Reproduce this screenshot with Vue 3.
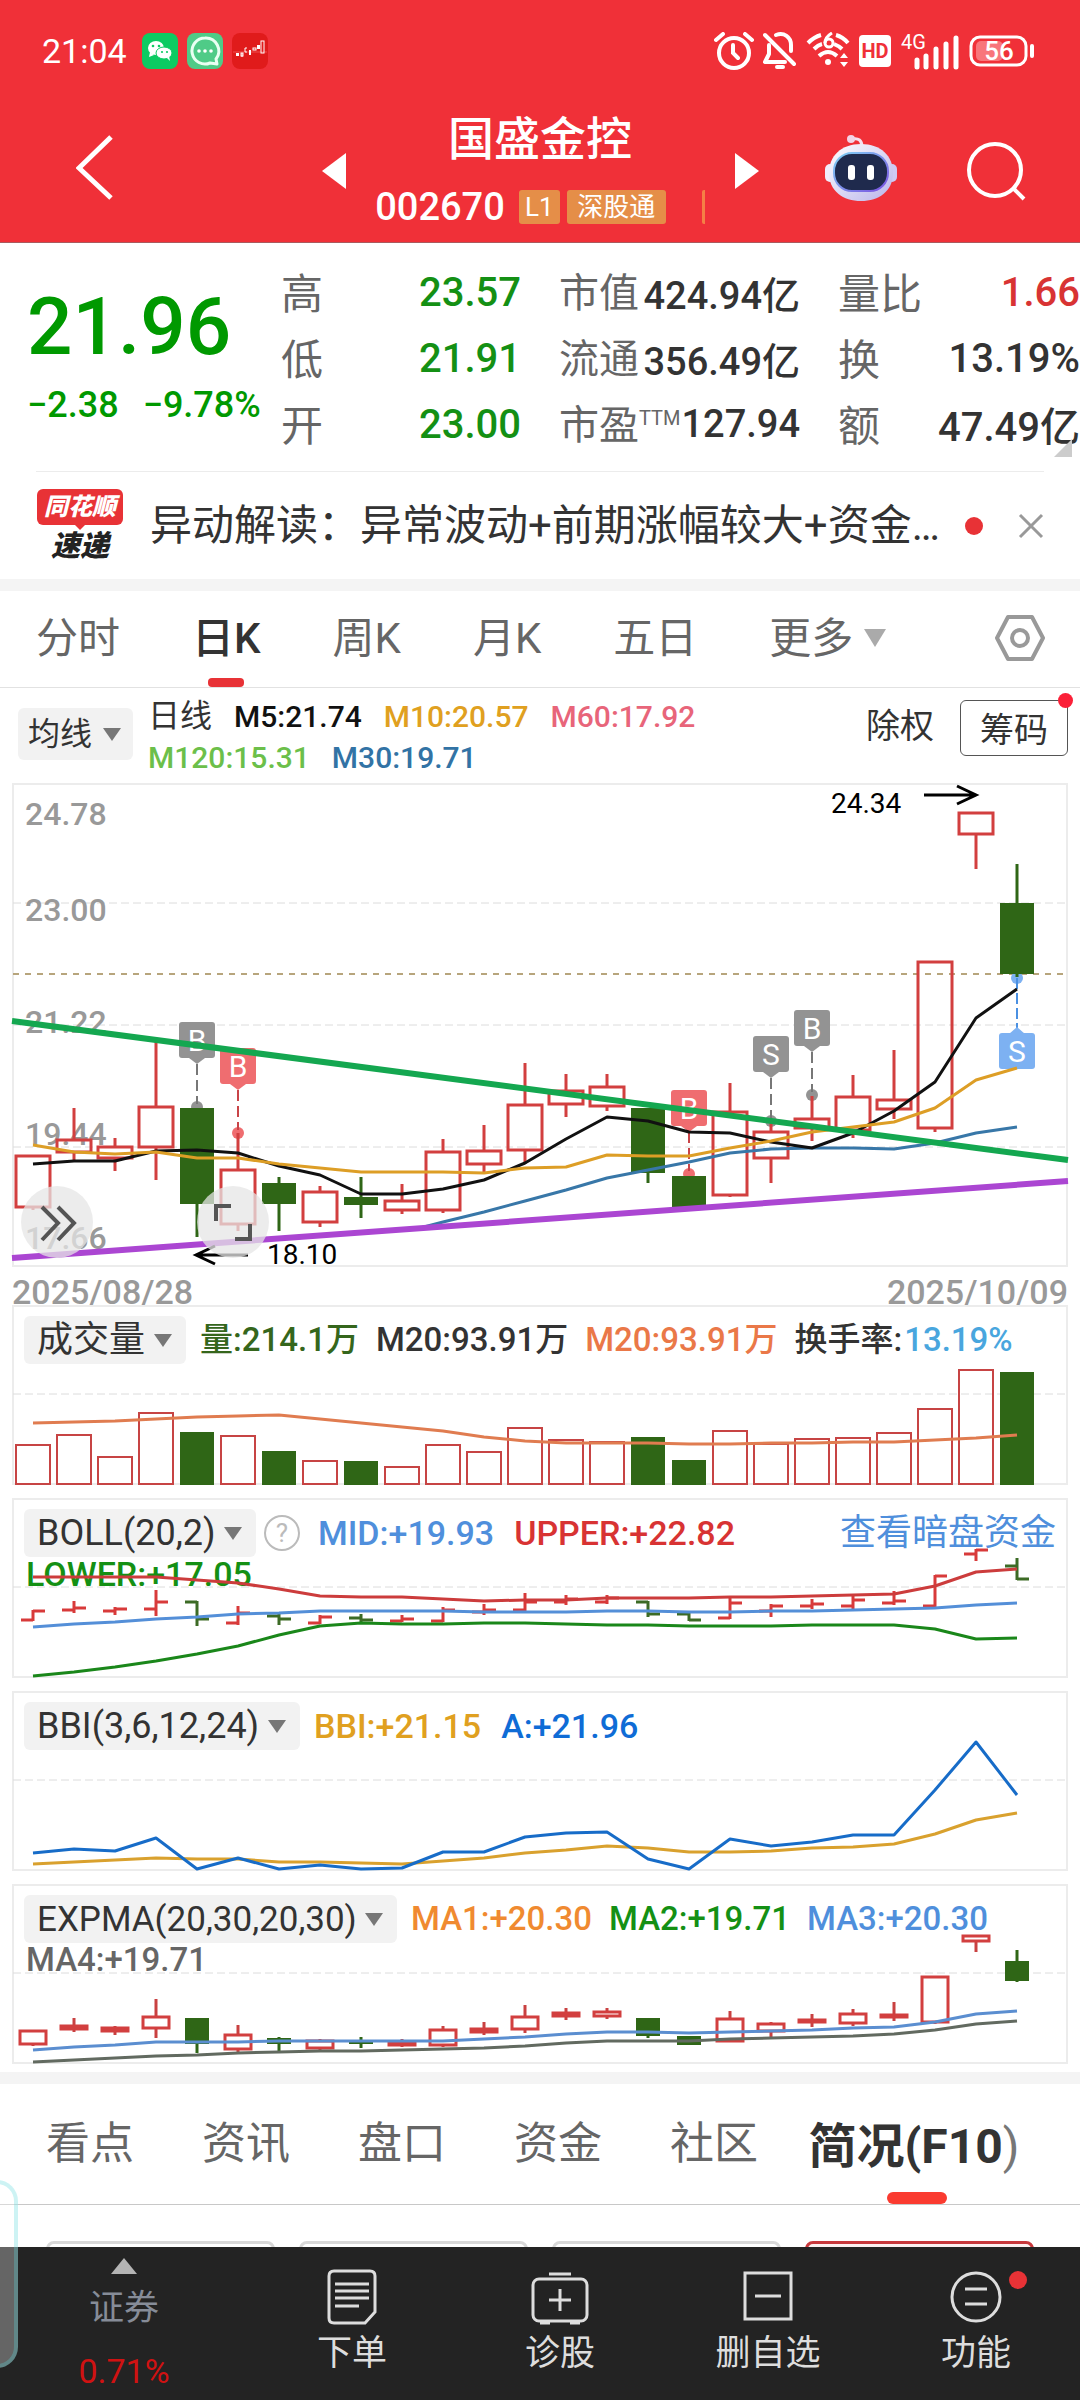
<script setup>
import { ref } from 'vue'

const step = 41
const cx = (i) => 33 + step * i
const path = (ys, from = 0) => ys.map((y, i) => `${cx(i + from)},${y}`).join(' ')

// up, high, body top, body bottom, low
const candles = [
  [1, 1155, 1155, 1208, 1210], [1, 1108, 1139, 1153, 1160], [1, 1138, 1146, 1159, 1171],
  [1, 1042, 1106, 1148, 1180], [0, 1108, 1108, 1204, 1237], [1, 1133, 1169, 1225, 1231],
  [0, 1177, 1183, 1204, 1231], [1, 1186, 1191, 1223, 1227], [0, 1177, 1197, 1205, 1218],
  [1, 1184, 1200, 1211, 1214], [1, 1139, 1151, 1211, 1213], [1, 1125, 1150, 1165, 1172],
  [1, 1063, 1104, 1151, 1164], [1, 1074, 1090, 1105, 1117], [1, 1074, 1086, 1107, 1111],
  [0, 1108, 1108, 1173, 1183], [0, 1176, 1176, 1207, 1207], [1, 1083, 1111, 1196, 1197],
  [1, 1123, 1131, 1159, 1183], [1, 1096, 1118, 1129, 1141], [1, 1075, 1096, 1131, 1138],
  [1, 1050, 1099, 1110, 1119], [1, 961, 961, 1129, 1132], [1, 812, 812, 835, 869],
  [0, 864, 903, 974, 977],
].map(([up, high, top, bottom, low], i) => ({ up: !!up, high, top, bottom, low, x: cx(i) }))

const scaled = (base, k) => candles.map((c) => {
  const f = (v) => Math.round(base + (v - 812) * k)
  return { up: c.up, x: c.x, high: f(c.high), top: f(c.top), bottom: f(c.bottom), low: f(c.low) }
})
const bollBars = scaled(1550, 0.177)
const expCandles = scaled(1936, 0.276)

const ma5 = path([1164, 1161, 1161, 1151, 1150, 1153, 1166, 1175, 1194, 1194, 1189, 1180, 1163, 1139, 1117, 1121, 1132, 1133, 1142, 1148, 1133, 1111, 1082, 1018, 989])
const ma10 = path([1145, 1152, 1154, 1152, 1158, 1158, 1164, 1168, 1172, 1172, 1172, 1173, 1168, 1167, 1155, 1156, 1156, 1148, 1141, 1132, 1127, 1122, 1108, 1080, 1068])
const ma30 = '420,1228 ' + path([1222, 1212, 1201, 1190, 1178, 1170, 1162, 1153, 1149, 1148, 1148, 1149, 1143, 1133, 1127], 10)

const volTops = [1444, 1434, 1456, 1412, 1432, 1435, 1451, 1460, 1461, 1466, 1444, 1451, 1427, 1439, 1441, 1437, 1460, 1430, 1443, 1438, 1437, 1432, 1408, 1369, 1372]
const volumes = volTops.map((y, i) => ({ y, x: cx(i), up: candles[i].up }))
const volMa = path([1423, 1422, 1421, 1419, 1417, 1416, 1415, 1419, 1423, 1427, 1431, 1437, 1441, 1443, 1443, 1443, 1444, 1444, 1443, 1443, 1442, 1442, 1440, 1438, 1435])

const upper = path([1577, 1577, 1577, 1577, 1580, 1583, 1589, 1596, 1597, 1597, 1599, 1601, 1600, 1600, 1598, 1598, 1598, 1597, 1597, 1596, 1595, 1594, 1586, 1572, 1569])
const mid = path([1627, 1624, 1622, 1619, 1617, 1614, 1613, 1611, 1611, 1611, 1611, 1612, 1612, 1612, 1611, 1611, 1612, 1612, 1611, 1611, 1610, 1609, 1608, 1605, 1603])
const lower = path([1676, 1672, 1667, 1661, 1654, 1646, 1635, 1626, 1623, 1624, 1624, 1623, 1623, 1624, 1625, 1625, 1626, 1626, 1626, 1625, 1625, 1625, 1629, 1639, 1638])

const lineA = path([1853, 1849, 1851, 1838, 1869, 1858, 1869, 1865, 1869, 1868, 1852, 1852, 1837, 1833, 1832, 1859, 1869, 1839, 1846, 1842, 1835, 1835, 1790, 1742, 1795])
const lineBbi = path([1864, 1862, 1860, 1858, 1859, 1859, 1862, 1862, 1863, 1864, 1861, 1858, 1853, 1850, 1846, 1848, 1852, 1852, 1851, 1848, 1847, 1844, 1834, 1820, 1813])

const expFast = path([2050, 2047, 2045, 2042, 2042, 2042, 2041, 2041, 2041, 2041, 2041, 2039, 2037, 2034, 2032, 2032, 2033, 2032, 2031, 2030, 2028, 2027, 2022, 2014, 2011])
const expSlow = path([2062, 2060, 2058, 2056, 2055, 2053, 2052, 2051, 2051, 2050, 2049, 2048, 2046, 2043, 2041, 2041, 2041, 2039, 2038, 2037, 2036, 2034, 2030, 2024, 2021])

const priceLabels = [['24.78', 825], ['23.00', 921], ['21.22', 1033], ['19.44', 1145], ['17.66', 1249]]

const markers = [
  { i: 4, t: 'B', y: 1022, dot: 1107, c: '#939393', l: '#777' },
  { i: 5, t: 'B', y: 1048, dot: 1133, c: '#ef6d70', l: '#c94448' },
  { i: 16, t: 'B', y: 1090, dot: 1174, c: '#ef6d70', l: '#c94448' },
  { i: 18, t: 'S', y: 1036, dot: 1121, c: '#939393', l: '#777' },
  { i: 19, t: 'B', y: 1010, dot: 1095, c: '#939393', l: '#777' },
]

const stats = [
  [['高', '23.57', 'down'], ['低', '21.91', 'down'], ['开', '23.00', 'down']],
  [['市值', '424.94亿'], ['流通', '356.49亿'], ['市盈', '127.94', '', 'TTM']],
  [['量比', '1.66', 'rise'], ['换', '13.19%'], ['额', '47.49亿']],
]

const periods = ['分时', '日K', '周K', '月K', '五日']
const period = ref('日K')
const infoTabs = ['看点', '资讯', '盘口', '资金', '社区']
</script>

<template>
  <div class="page">
    <header class="top">
      <div class="status">
        <span class="clock">21:04</span>
        <svg class="app" viewBox="0 0 36 36">
          <rect width="36" height="36" rx="8" fill="#0ccb62" />
          <ellipse cx="14" cy="15" rx="8" ry="7" fill="#fff" /><path d="M8 19l-1 5 5-2z" fill="#fff" />
          <ellipse cx="22" cy="20" rx="8" ry="6" fill="#fff" stroke="#0ccb62" /><path d="M25 25l3 3-1-5z" fill="#fff" />
          <g fill="#0ccb62"><circle cx="11" cy="13" r="1.300" /><circle cx="17" cy="13" r="1.300" /><circle cx="20" cy="19" r="1.100" /><circle cx="25" cy="19" r="1.100" /></g>
        </svg>
        <svg class="app" viewBox="0 0 36 36">
          <rect width="36" height="36" rx="8" fill="#4fcb87" />
          <path d="M18 5a13 13 0 1 0 5 25l7 1-1-5A13 13 0 0 0 18 5z" fill="none" stroke="#e9fff2" stroke-width="3" stroke-linejoin="round" />
          <g fill="#fff"><circle cx="12" cy="18" r="1.800" /><circle cx="18" cy="18" r="1.800" /><circle cx="24" cy="18" r="1.800" /></g>
        </svg>
        <svg class="app" viewBox="0 0 36 36">
          <rect width="36" height="36" rx="8" fill="#e01b1b" />
          <path d="M1 19h34" stroke="#ee5050" />
          <g fill="none" stroke="#fff"><path d="M15 15h-2v4h2M10 20v4" /><rect x="9" y="20" width="2" height="3" /><rect x="21" y="15" width="3" height="2" /><rect x="29" y="8" width="3" height="12" /></g>
          <g fill="#fff"><rect x="4" y="20" width="3" height="3" /><rect x="17" y="17" width="2" height="5" /><rect x="25" y="12" width="3" height="4" /></g>
        </svg>
        <div class="signals">
          <svg width="40" height="38" viewBox="0 0 40 38" fill="none" stroke="#fff" stroke-width="4" stroke-linecap="round">
            <circle cx="20" cy="21" r="15" /><path d="M19 13v8l5 5M2 8l7-6M38 8l-7-6" />
          </svg>
          <svg width="34" height="38" viewBox="0 0 34 38" fill="none" stroke="#fff" stroke-width="4" stroke-linecap="round" stroke-linejoin="round">
            <path d="M2 3l29 29M13 3c8-3 15 2 15 10v6M6 13v9l-4 8h20" /><path d="M14 35h6" />
          </svg>
          <svg width="44" height="38" viewBox="0 0 44 38" fill="none" stroke="#fff" stroke-width="4">
            <path d="M2 11q6-6 13-8M30 3q7 2 12 8M8 17q4-4 8-5M28 12q5 2 8 5M13 24q9-8 18 0" />
            <path d="M26 1q-7 4-7 10" stroke-width="3" /><circle cx="23" cy="11" r="4" stroke-width="3" />
            <circle cx="22" cy="30" r="3" fill="#fff" stroke="none" /><path d="M34 26l4-5 4 5zM34 30l4 5 4-5z" fill="#fff" stroke="none" />
          </svg>
          <svg width="32" height="32" viewBox="0 0 32 32">
            <rect width="32" height="32" rx="4" fill="#fff" /><text x="16" y="23" class="hd" text-anchor="middle">HD</text>
          </svg>
          <svg class="cell" width="60" height="38" viewBox="0 0 60 38">
            <text x="1" y="17" class="g4">4G</text>
            <path d="M17 35v-7M26 35V24M36 35V17M46 35V12M56 35V6" stroke="#fff" stroke-width="5" stroke-linecap="round" />
          </svg>
          <svg width="66" height="32" viewBox="0 0 66 32">
            <rect x="2" y="2" width="55" height="28" rx="9" fill="none" stroke="#fff" stroke-width="3" />
            <rect x="7" y="6" width="27" height="20" rx="5" fill="#f8767b" />
            <path d="M63 11v10" stroke="#fff" stroke-width="4" stroke-linecap="round" />
            <text x="30" y="25" class="batt" text-anchor="middle">56</text>
          </svg>
        </div>
      </div>
      <nav class="nav">
        <div class="nav-left">
          <button class="plain" aria-label="返回">
            <svg width="38" height="66" viewBox="0 0 38 66"><path d="M35 2L3 33l32 30" fill="none" stroke="#fff" stroke-width="5" /></svg>
          </button>
        </div>
        <div class="stock">
          <button class="plain" aria-label="上一只"><svg width="24" height="36" viewBox="0 0 24 36"><path d="M24 0v36L0 18z" fill="#fff" /></svg></button>
          <div class="stock-id">
            <h1>国盛金控</h1>
            <div class="code"><span class="num">002670</span><span class="badge">L1</span><span class="badge wide">深股通</span><i></i></div>
          </div>
          <button class="plain" aria-label="下一只"><svg width="24" height="36" viewBox="0 0 24 36"><path d="M0 0v36l24-18z" fill="#fff" /></svg></button>
        </div>
        <div class="nav-right">
          <button class="plain" aria-label="智能助手">
            <svg width="72" height="68" viewBox="0 0 72 68">
              <defs>
                <linearGradient id="shell" x1="0" y1="0" x2="1" y2="1"><stop offset="0" stop-color="#fff" /><stop offset="1" stop-color="#b9b4ea" /></linearGradient>
                <linearGradient id="rim" x1="0" y1="0" x2="1" y2="1"><stop offset="0" stop-color="#7fd3f5" /><stop offset="1" stop-color="#7a4fe0" /></linearGradient>
              </defs>
              <path d="M27 5q10-2 10 8" fill="none" stroke="#f6dfee" stroke-width="3" /><circle cx="26" cy="5" r="4" fill="#f3d3e6" />
              <rect x="0" y="30" width="10" height="18" rx="5" fill="#f1ecfb" /><rect x="62" y="30" width="10" height="18" rx="5" fill="#cfcaf3" />
              <path d="M36 10c20 0 32 12 32 29 0 18-14 28-32 28S4 57 4 39c0-17 12-29 32-29z" fill="url(#shell)" />
              <rect x="9" y="19" width="54" height="38" rx="18" fill="#1f2a4d" stroke="url(#rim)" stroke-width="2" />
              <rect x="23" y="31" width="7" height="15" rx="3" fill="#fff" /><rect x="42" y="31" width="7" height="15" rx="3" fill="#fff" />
            </svg>
          </button>
          <button class="plain" aria-label="搜索">
            <svg width="60" height="60" viewBox="0 0 60 60" fill="none" stroke="#fff" stroke-width="4"><circle cx="29" cy="29" r="26" /><path d="M47 47l11 11" /></svg>
          </button>
        </div>
      </nav>
    </header>

    <section class="quote">
      <div class="last">
        <strong>21.96</strong>
        <p><span>−2.38</span><span>−9.78%</span></p>
      </div>
      <dl v-for="(col, n) in stats" :key="n" :class="'col' + n">
        <div v-for="[name, value, tone, sup] in col" :key="name">
          <dt>{{ name }}<sup v-if="sup">{{ sup }}</sup></dt>
          <dd :class="tone">{{ value }}</dd>
        </div>
      </dl>
      <svg class="corner" width="18" height="18" viewBox="0 0 18 18"><path d="M18 0v18H0z" fill="#ccc" /></svg>
    </section>

    <section class="news">
      <div class="brand">
        <span class="brand-top">同花顺</span>
        <span class="brand-sub">速递</span>
      </div>
      <a href="#">异动解读：异常波动+前期涨幅较大+资金…</a>
      <i class="dot"></i>
      <button class="plain" aria-label="关闭"><svg width="26" height="26" viewBox="0 0 26 26"><path d="M2 2l22 22M24 2L2 24" stroke="#999" stroke-width="3" /></svg></button>
    </section>

    <nav class="periods">
      <button v-for="p in periods" :key="p" class="plain" :class="{ on: p === period }" @click="period = p">{{ p }}</button>
      <button class="plain more">更多<svg width="24" height="20" viewBox="0 0 24 20"><path d="M1 1h22L12 19z" fill="#aaa" /></svg></button>
      <button class="plain gear" aria-label="设置">
        <svg width="50" height="48" viewBox="0 0 50 48" fill="none" stroke="#999" stroke-width="4"><path d="M13 3h24l11 21-11 21H13L2 24z" stroke-linejoin="round" /><circle cx="25" cy="24" r="8" /></svg>
      </button>
    </nav>

    <section class="averages">
      <label class="pick small">
        <select aria-label="主图指标"><option>均线</option></select>
        <svg width="18" height="13" viewBox="0 0 18 13"><path d="M0 0h18L9 13z" fill="#777" /></svg>
      </label>
      <div class="ma">
        <p><span>日线</span><span class="k">M5:21.74</span><span class="y">M10:20.57</span><span class="p">M60:17.92</span></p>
        <p><span class="g">M120:15.31</span><span class="b">M30:19.71</span></p>
      </div>
      <button class="plain adj">除权</button>
      <button class="chips">筹码<i></i></button>
    </section>

    <main class="charts">
      <svg class="chart" viewBox="12 783 1056 485">
        <rect x="13" y="784" width="1054" height="482" class="frame" />
        <path d="M13 903H1067M13 1025H1067M13 1147H1067" class="grid" />
        <path d="M13 974H1067" stroke="#b7a57c" stroke-width="2" stroke-dasharray="6 6" />
        <text v-for="[t, y] in priceLabels" :key="t" x="25" :y="y" class="axis">{{ t }}</text>
        <circle v-for="m in markers" :key="m.i" :cx="cx(m.i)" :cy="m.dot" r="6" :fill="m.c" />
        <circle :cx="cx(24)" cy="978" r="6" fill="#7db1f2" />
        <g v-for="c in candles" :key="c.x">
          <path :d="`M${c.x} ${c.high}V${c.top}M${c.x} ${c.bottom}V${c.low}`" :stroke="c.up ? '#d23f3f' : '#2f6616'" stroke-width="3" />
          <rect v-if="c.up" :x="c.x - 17" :y="c.top + 1" width="34" :height="c.bottom - c.top - 2" fill="none" stroke="#d23f3f" stroke-width="3" />
          <rect v-else :x="c.x - 17" :y="c.top" width="34" :height="c.bottom - c.top" fill="#2f6616" />
        </g>
        <g v-for="m in markers" :key="'m' + m.i">
          <path :d="`M${cx(m.i)} ${m.y + 42}V${m.dot - 3}`" :stroke="m.l" stroke-width="2" stroke-dasharray="11 5" />
          <path :d="`M${cx(m.i) - 8} ${m.y + 36}h16l-8 6z`" :fill="m.c" />
          <rect :x="cx(m.i) - 18" :y="m.y" width="36" height="36" rx="3" :fill="m.c" />
          <text :x="cx(m.i)" :y="m.y + 29" class="mark">{{ m.t }}</text>
        </g>
        <path d="M1017 978V1028" stroke="#4a90e2" stroke-width="2" stroke-dasharray="11 4" />
        <path d="M1009 1034l8-7 8 7z" fill="#7db1f2" />
        <rect x="999" y="1033" width="36" height="36" rx="3" fill="#7db1f2" />
        <text x="1017" y="1062" class="mark">S</text>
        <polyline :points="ma30" class="line" stroke="#3877a8" />
        <polyline :points="ma5" class="line" stroke="#111" />
        <polyline :points="ma10" class="line" stroke="#dd9e26" />
        <path d="M12 1258L1068 1181" stroke="#ab46d2" stroke-width="6" />
        <path d="M12 1021L1068 1160" stroke="#14a750" stroke-width="6" />
        <g fill="none" stroke="#000" stroke-width="3">
          <path d="M924 795h51M957 786l19 9-19 9M248 1255h-51M215 1246l-19 9 19 9" />
        </g>
        <text x="831" y="813" class="peak">24.34</text>
        <text x="267" y="1264" class="peak">18.10</text>
        <circle cx="57" cy="1222" r="36" fill="#e6e6e6" fill-opacity=".75" />
        <circle cx="233" cy="1222" r="36" fill="#e6e6e6" fill-opacity=".75" />
        <g fill="none" stroke="#555" stroke-width="4"><path d="M42 1207l16 16-16 17M58 1207l16 16-16 17M216 1221v-15h15M235 1239h15v-15" /></g>
      </svg>
      <div class="dates"><span>2025/08/28</span><span>2025/10/09</span></div>

      <section class="panel">
        <div class="head tight">
          <label class="pick"><select aria-label="副图一"><option>成交量</option></select><svg width="18" height="13" viewBox="0 0 18 13"><path d="M0 0h18L9 13z" fill="#777" /></svg></label>
          <span class="vol">量:214.1万</span><span class="ink">M20:93.91万</span><span class="o">M20:93.91万</span><span class="ink">换手率:<em>13.19%</em></span>
        </div>
        <svg class="chart" viewBox="12 1305 1056 180">
          <rect x="13" y="1306" width="1054" height="178" class="frame" />
          <path d="M13 1394H1067" class="grid" />
          <g v-for="v in volumes" :key="v.x">
            <rect v-if="v.up" :x="v.x - 17" :y="v.y + 1" width="34" :height="1483 - v.y" fill="none" stroke="#c74444" stroke-width="2" />
            <rect v-else :x="v.x - 17" :y="v.y" width="34" :height="1485 - v.y" fill="#2f6616" />
          </g>
          <polyline :points="volMa" class="line" stroke="#e07c50" />
        </svg>
      </section>

      <section class="panel">
        <div class="head">
          <label class="pick"><select aria-label="副图二"><option>BOLL(20,2)</option></select><svg width="18" height="13" viewBox="0 0 18 13"><path d="M0 0h18L9 13z" fill="#777" /></svg></label>
          <button class="help" aria-label="指标说明">?</button>
          <span class="sky">MID:+19.93</span><span class="rise">UPPER:+22.82</span>
          <a href="#" class="sky">查看暗盘资金</a>
          <p class="down">LOWER:+17.05</p>
        </div>
        <svg class="chart" viewBox="12 1498 1056 180">
          <rect x="13" y="1499" width="1054" height="178" class="frame" />
          <path d="M13 1587H1067" class="grid" />
          <path
            v-for="b in bollBars" :key="b.x" class="line" :stroke="b.up ? '#d83a3a' : '#3c6b25'"
            :d="b.up ? `M${b.x - 12} ${b.bottom}h12M${b.x} ${b.top}h12M${b.x} ${b.high - 1}V${b.low + 1}` : `M${b.x - 12} ${b.top}h12M${b.x} ${b.bottom}h12M${b.x} ${b.high - 1}V${b.low + 1}`"
          />
          <polyline :points="upper" class="line" stroke="#cc3c3c" />
          <polyline :points="lower" class="line" stroke="#1a871a" />
          <polyline :points="mid" class="line" stroke="#548fd8" />
        </svg>
      </section>

      <section class="panel">
        <div class="head">
          <label class="pick"><select aria-label="副图三"><option>BBI(3,6,12,24)</option></select><svg width="18" height="13" viewBox="0 0 18 13"><path d="M0 0h18L9 13z" fill="#777" /></svg></label>
          <span class="y">BBI:+21.15</span><span class="blue">A:+21.96</span>
        </div>
        <svg class="chart" viewBox="12 1691 1056 180">
          <rect x="13" y="1692" width="1054" height="178" class="frame" />
          <path d="M13 1780H1067" class="grid" />
          <polyline :points="lineBbi" class="line" stroke="#d9a12e" />
          <polyline :points="lineA" class="line" stroke="#176cc8" />
        </svg>
      </section>

      <section class="panel">
        <div class="head tight latin">
          <label class="pick"><select aria-label="副图四"><option>EXPMA(20,30,20,30)</option></select><svg width="18" height="13" viewBox="0 0 18 13"><path d="M0 0h18L9 13z" fill="#777" /></svg></label>
          <span class="o2">MA1:+20.30</span><span class="down">MA2:+19.71</span><span class="sky">MA3:+20.30</span>
          <p class="grey">MA4:+19.71</p>
        </div>
        <svg class="chart" viewBox="12 1884 1056 180">
          <rect x="13" y="1885" width="1054" height="178" class="frame" />
          <path d="M13 1973H1067" class="grid" />
          <g v-for="c in expCandles" :key="c.x">
            <path :d="`M${c.x} ${c.high}V${c.top}M${c.x} ${c.bottom}V${c.low}`" :stroke="c.up ? '#c94141' : '#2f6616'" stroke-width="3" />
            <rect v-if="c.up" :x="c.x - 13" :y="c.top" width="26" :height="Math.max(1, c.bottom - c.top - 1)" fill="#fff" stroke="#d23f3f" stroke-width="3" />
            <rect v-else :x="c.x - 12" :y="c.top" width="24" :height="c.bottom - c.top" fill="#2f6616" />
          </g>
          <polyline :points="expFast" class="line" stroke="#5b8ed0" />
          <polyline :points="expSlow" class="line" stroke="#626a60" />
        </svg>
      </section>
    </main>

    <nav class="info">
      <button v-for="t in infoTabs" :key="t" class="plain">{{ t }}</button>
      <button class="plain on">简况(F10<span>)</span></button>
    </nav>
    <div class="cards"><i></i><i></i><i></i><i class="sel"></i></div>

    <footer class="bar">
      <button class="plain index">
        <svg width="26" height="16" viewBox="0 0 26 16"><path d="M13 0l13 16H0z" fill="#b4b4b4" /></svg>
        <span>证券</span><b>0.71%</b>
      </button>
      <button class="plain">
        <svg width="50" height="56" viewBox="0 0 50 56" fill="none" stroke="#ddd" stroke-width="3"><path d="M7 2h36q5 0 5 5v36L38 54H7q-5 0-5-5V7q0-5 5-5zM8 15h34M8 22h34M8 29h34M8 37h24" /></svg>
        下单
      </button>
      <button class="plain">
        <svg width="58" height="56" viewBox="0 0 58 56" fill="none" stroke="#ddd" stroke-width="3"><rect x="2" y="10" width="54" height="42" rx="6" /><path d="M18 5h22M29 20v22M18 31h22M9 54h10M39 54h10" /></svg>
        诊股
      </button>
      <button class="plain">
        <svg width="50" height="56" viewBox="0 0 50 56" fill="none" stroke="#ddd" stroke-width="3"><rect x="2" y="4" width="46" height="46" /><path d="M12 27h26" /></svg>
        删自选
      </button>
      <button class="plain">
        <svg width="52" height="56" viewBox="0 0 52 56" fill="none" stroke="#ddd" stroke-width="3"><circle cx="26" cy="28" r="24" /><path d="M15 20h22M15 35h22" /></svg>
        功能<i class="dot"></i>
      </button>
    </footer>
    <div class="handle"></div>
  </div>
</template>

<style>
body { margin: 0; background: #fff; }
</style>

<style scoped>
.page { position: relative; overflow: hidden; background: #fff; color: #333; font-family: Roboto, "Noto Sans CJK SC", sans-serif; }
p, dl, dd, h1 { margin: 0; }
svg { display: block; flex: none; }
.plain { padding: 0; border: 0; background: none; font: inherit; color: inherit; }

.top { background: #f03038; color: #fff; border-bottom: 1px solid #a95a5e; }
.status { display: flex; align-items: center; gap: 9px; height: 102px; padding: 0 45px 0 42px; }
.clock { font-size: 34px; margin-right: 6px; }
.app { width: 36px; height: 36px; }
.signals { display: flex; align-items: center; gap: 9px; margin-left: auto; }
.cell { overflow: visible; }
.hd { font: 700 20px Roboto, sans-serif; fill: #f03038; }
.g4 { font: 400 20px Roboto, sans-serif; fill: #fff; }
.batt { font: 500 26px Roboto, sans-serif; fill: #fff; }
.nav { display: grid; grid-template-columns: 1fr auto 1fr; height: 140px; }
.nav-left { display: flex; padding: 33px 0 0 76px; align-items: flex-start; }
.stock { display: flex; justify-content: space-between; width: 437px; }
.stock > .plain { align-self: flex-start; margin-top: 51px; }
.stock-id { display: flex; flex-direction: column; align-items: center; padding-top: 12px; }
h1 { font-size: 46px; line-height: 50px; font-weight: 500; }
.code { display: flex; align-items: center; height: 34px; margin-top: 26px; }
.num { font-size: 38px; line-height: 34px; font-weight: 500; margin-right: 14px; }
.badge { box-sizing: border-box; width: 41px; margin-right: 7px; border-radius: 3px; background: #e58e48; font-size: 26px; line-height: 34px; text-align: center; }
.badge.wide { width: 99px; }
.code i { width: 3px; height: 34px; margin-left: 29px; background: #f57f45; border-radius: 2px 0 0 2px; }
.nav-right { display: flex; justify-content: space-between; align-items: flex-start; padding: 32px 54px 0 66px; }
.nav-right .plain:last-child { margin-top: 7px; }

.quote { position: relative; display: grid; grid-template-columns: 254fr 240fr 279fr 280fr; padding: 16px 0 14px 27px; }
.last { color: #090; white-space: nowrap; }
.last strong { display: block; margin-top: 22px; font-size: 80px; line-height: 92px; font-weight: 500; }
.last p { display: flex; gap: 24px; margin-top: 10px; font-size: 36px; line-height: 44px; font-weight: 500; }
.quote dl > div { display: flex; justify-content: space-between; align-items: center; height: 66px; white-space: nowrap; }
.quote .col1, .quote .col2 { margin-left: 38px; }
dt { padding-bottom: 4px; font-size: 42px; color: #666; }
dd { font-size: 40px; font-weight: 500; }
.col1 dt { font-size: 40px; }
.col1 dd { font-size: 38px; }
sup { font-size: 20px; line-height: 20px; vertical-align: 14px; }
.down { color: #149014; }
.rise { color: #d83333; }
.corner { position: absolute; right: 8px; bottom: 14px; }

.news { display: flex; align-items: center; height: 107px; margin: 0 36px; border-top: 1px solid #ececec; }
.brand { display: flex; flex-direction: column; align-items: center; width: 88px; font-style: italic; font-weight: 900; }
.brand-top { position: relative; width: 86px; background: #e83236; border-radius: 6px; color: #fff; font-size: 24px; line-height: 36px; text-align: center; }
.brand-top::after { content: ""; position: absolute; left: 38px; top: 100%; border: 5px solid transparent; border-top-color: #e83236; border-bottom: 0; }
.brand-sub { margin-top: 5px; font-size: 29px; line-height: 32px; color: #222; }
.news a { margin-left: 26px; padding-bottom: 8px; font-size: 42px; color: #333; text-decoration: none; white-space: nowrap; }
.dot { display: block; width: 18px; height: 18px; border-radius: 50%; background: #e83236; }
.news .dot { margin-left: auto; }
.news .plain { margin-left: 35px; }

.periods { display: flex; align-items: center; gap: 72px; height: 96px; padding: 0 35px 0 36px; border-top: 12px solid #f4f4f4; border-bottom: 1px solid #e2e2e2; font-size: 42px; color: #666; }
.periods .plain { position: relative; height: 96px; padding-bottom: 10px; white-space: nowrap; }
.periods .on { color: #333; font-weight: 500; }
.periods .on::after { content: ""; position: absolute; left: 50%; bottom: 0; width: 36px; height: 9px; margin-left: -18px; border-radius: 4px; background: #e83236; }
.periods .more { display: flex; align-items: center; gap: 10px; }
.periods .more svg { margin-top: 8px; }
.periods .gear { margin-left: auto; display: flex; align-items: center; padding-bottom: 2px; }

.averages { display: flex; height: 95px; padding: 0 12px 0 18px; align-items: flex-start; }
.pick { position: relative; display: flex; align-items: center; margin-right: 14px; }
.pick select { appearance: none; box-sizing: border-box; height: 48px; padding: 0 40px 0 13px; border: 0; border-radius: 6px; background: #f2f2f2; color: #333; font: 400 36px Roboto, "Noto Sans CJK SC", sans-serif; }
.pick svg { position: absolute; right: 14px; pointer-events: none; }
.pick.small { margin: 20px 15px 0 0; }
.pick.small select { height: 52px; padding: 0 40px 0 10px; font-size: 32px; }
.pick.small svg { right: 12px; }
.ma { padding-top: 8px; font-size: 30px; font-weight: 500; line-height: 41px; }
.ma p { display: flex; gap: 22px; white-space: nowrap; }
.ma p span:first-child:not(.g) { font-size: 32px; font-weight: 400; }
.k { color: #111; }
.y { color: #e0a020; }
.p { color: #e8657a; }
.g { color: #6cbf4a; }
.b { color: #3273a5; }
.adj { margin: 11px 26px 0 auto; font-size: 34px; line-height: 54px; }
.chips { position: relative; width: 108px; height: 56px; margin-top: 12px; padding: 0; border: 1px solid #555; border-radius: 6px; background: #fff; color: #333; font: 400 34px "Noto Sans CJK SC", sans-serif; line-height: 50px; }
.chips i { position: absolute; right: -6px; top: -8px; width: 15px; height: 15px; border-radius: 50%; background: #fb2038; }

.charts { padding: 0 12px 8px; }
.chart { width: 100%; height: auto; overflow: visible; }
.frame { fill: none; stroke: #ececec; stroke-width: 2; }
.grid { stroke: #dcdcdc; stroke-width: 1; stroke-dasharray: 8 4; }
.axis { font: 500 32px Roboto, sans-serif; fill: #999; }
.mark { font: 400 30px Roboto, sans-serif; fill: #fff; text-anchor: middle; }
.peak { font: 400 28px Roboto, sans-serif; fill: #000; }
.line { fill: none; stroke-width: 3; stroke-linejoin: round; }
.dates { display: flex; justify-content: space-between; height: 37px; font-size: 34px; line-height: 49px; color: #999; font-weight: 500; }
.panel { display: grid; }
.panel + .panel { margin-top: 13px; }
.panel > * { grid-area: 1 / 1; }
.panel .chart { pointer-events: none; }
.head { display: flex; flex-wrap: wrap; align-items: center; align-content: flex-start; padding: 11px 12px 0; font-size: 34px; font-weight: 500; line-height: 46px; white-space: nowrap; }
.head > span { margin-right: 20px; }
.head > a { margin-left: auto; font-size: 36px; font-weight: 400; text-decoration: none; }
.head > p { width: 100%; padding-left: 2px; line-height: 34px; }
.head em { margin-left: 2px; font-style: normal; color: #49a6de; }
.head.tight { font-size: 33px; }
.head.tight > span { margin-right: 17px; }
.head.tight > span:last-of-type { margin-right: 0; }
.head.latin .pick select { font-size: 35px; }
.help { box-sizing: border-box; width: 36px; height: 36px; margin: 0 18px 0 -6px; padding: 0; border: 2px solid #bbb; border-radius: 50%; background: none; color: #bbb; font: 400 26px Roboto, sans-serif; line-height: 30px; }
.vol { color: #35661c; }
.ink { color: #333; }
.o { color: #ea7848; }
.o2 { color: #f08a30; }
.sky { color: #4f8fdc; }
.blue { color: #0f6cd6; }
.grey { color: #666; }

.info { display: grid; grid-template-columns: repeat(5, 156fr) 244fr; height: 120px; padding: 0 44px 0 12px; border-top: 12px solid #f4f4f4; border-bottom: 1px solid #c8c8c8; font-size: 44px; color: #666; }
.info .plain { position: relative; padding-bottom: 8px; white-space: nowrap; }
.info .on { padding-bottom: 4px; color: #333; font-size: 48px; font-weight: 700; }
.info .on span { color: #777; font-weight: 400; }
.info .on::after { content: ""; position: absolute; left: 50%; bottom: 0; width: 60px; height: 12px; margin-left: -27px; border-radius: 6px; background: #fa3b30; }
.cards { display: grid; grid-template-columns: repeat(4, 1fr); gap: 24px; height: 6px; padding: 36px 46px 0; overflow: hidden; }
.cards i { height: 40px; border: 3px solid #d8d8d8; border-radius: 8px; }
.cards .sel { border-color: #c8383c; background: #fdf0f0; }

.bar { display: grid; grid-template-columns: 248fr 208fr 208fr 208fr 208fr; height: 153px; background: #232323; color: #ddd; font-size: 35px; line-height: 50px; }
.bar .plain { position: relative; display: flex; flex-direction: column; align-items: center; padding-top: 22px; }
.bar .plain svg { margin-bottom: 4px; }
.bar .index { padding-top: 11px; color: #868c98; }
.bar .index svg { margin-bottom: 10px; }
.bar b { margin-top: 12px; font-size: 34px; font-weight: 400; color: #d01212; }
.bar .dot { position: absolute; left: 50%; top: 24px; margin-left: 33px; }
.handle { position: absolute; left: -24px; bottom: 32px; width: 34px; height: 180px; border: 4px solid rgba(90, 215, 220, .3); border-radius: 28px; background: rgba(255, 255, 255, .3); }
</style>
